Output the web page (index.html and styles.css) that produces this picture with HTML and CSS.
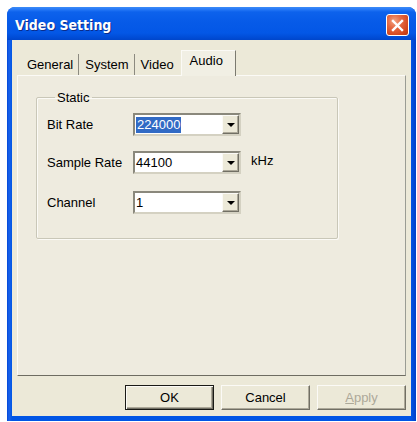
FILE: index.html
```html
<!DOCTYPE html>
<html>
<head>
<meta charset="utf-8">
<title>Video Setting</title>
<link rel="stylesheet" href="styles.css">
</head>
<body>
<div class="window">
  <div class="titlebar">
    <span class="title">Video Setting</span>
    <span class="close">
      <svg width="13" height="13" viewBox="0 0 13 13"><path d="M2 2 L11 11 M11 2 L2 11" stroke="#fff" stroke-width="2.4" stroke-linecap="square"/></svg>
    </span>
  </div>
  <div class="client">
    <div class="tabs">
      <div class="tab tab-first">General</div>
      <div class="tab">System</div>
      <div class="tab tab-last">Video</div>
      <div class="tab tab-active">Audio</div>
    </div>
    <div class="panel">
      <fieldset class="group">
        <legend class="legend">Static</legend>
        <div class="row">
          <span class="label">Bit Rate</span>
          <span class="combo"><span class="value"><span class="sel">224000</span></span><span class="drop"><span class="arrow"></span></span></span>
        </div>
        <div class="row row-2">
          <span class="label">Sample Rate</span>
          <span class="combo"><span class="value">44100</span><span class="drop"><span class="arrow"></span></span></span>
          <span class="unit">kHz</span>
        </div>
        <div class="row row-3">
          <span class="label">Channel</span>
          <span class="combo"><span class="value">1</span><span class="drop"><span class="arrow"></span></span></span>
        </div>
      </fieldset>
    </div>
    <div class="buttons">
      <div class="btn btn-default">OK</div>
      <div class="btn">Cancel</div>
      <div class="btn btn-disabled"><u>A</u>pply</div>
    </div>
  </div>
</div>
</body>
</html>
```

FILE: styles.css
```css
html, body {
  margin: 0;
  padding: 0;
  background: #ffffff;
}
body {
  font-family: "Liberation Sans", Arial, sans-serif;
  font-size: 13px;
  color: #000;
}
.window {
  margin: 7px 0 0 7px;
  width: 409px;
  height: 414px;
  background: linear-gradient(to right, #0046d8 0, #1a62ea 2px, #0055e5 5px, #0055e5 404px, #0040c8 409px);
  border-radius: 8px 8px 0 0;
  display: flex;
  flex-direction: column;
  overflow: hidden;
}
.titlebar {
  height: 33px;
  flex: none;
  display: flex;
  align-items: center;
  justify-content: space-between;
  background: linear-gradient(to bottom, #3d8cf5 0, #2a7cf8 2px, #0d62ec 5px, #075be8 14px, #0357e6 26px, #004bd4 31px, #0046ca 33px);
}
.title {
  color: #fff;
  font-family: "DejaVu Sans Condensed", "DejaVu Sans", "Liberation Sans", sans-serif;
  font-stretch: condensed;
  font-weight: bold;
  font-size: 14px;
  padding: 2px 0 0 8px;
  text-shadow: 1px 1px 0 #0a2c8a;
}
.close {
  width: 21px;
  height: 20px;
  margin-right: 7px;
  margin-top: 3px;
  border: 1px solid #fff;
  border-radius: 3px;
  background: radial-gradient(circle at 35% 30%, #f3a482 0, #e66a43 35%, #d2461d 75%, #b9360f 100%);
  display: flex;
  align-items: center;
  justify-content: center;
}
.client {
  flex: none;
  height: 376px;
  margin: 0 5px;
  background: #ece9d8;
  display: flex;
  flex-direction: column;
  padding: 0 5px;
}
.tabs {
  height: 35px;
  flex: none;
  display: flex;
  align-items: flex-end;
  padding-left: 3px;
  position: relative;
  z-index: 1;
}
.tab {
  height: 21px;
  line-height: 21px;
  padding: 0 5px 0 6px;
  border-right: 1px solid #8c8a80;
  box-sizing: border-box;
  margin-bottom: 0;
  background: #ece9d8;
}
.tab-first {
  padding-left: 7px;
}
.tab-last {
  border-right: none;
  padding-right: 5px;
}
.tab-active {
  height: 26px;
  line-height: 19px;
  margin-bottom: -1px;
  padding: 0 12px 0 8px;
  border-left: 1px solid #fbfaf6;
  border-top: 1px solid #fbfaf6;
  border-right: 1px solid #7b7a70;
  background: #f1efe4;
  margin-left: 2px;
}
.panel {
  flex: none;
  height: 301px;
  box-sizing: border-box;
  border: 1px solid #9a9c94;
  border-bottom: 1px solid #6e6c62;
  border-top-color: #fbfaf6;
  border-left-color: #fbfaf6;
  background: #eeebdf;
  padding: 14px 0 0 18px;
}
.group {
  margin: 0;
  width: 302px;
  box-sizing: border-box;
  border: 1px solid #c9c7b8;
  box-shadow: 1px 1px 0 #fbfaf6, inset 1px 1px 0 #fbfaf6;
  border-radius: 2px;
  padding: 8px 0 24px 10px;
}
.legend {
  padding: 0 2px;
  margin-left: 8px;
  line-height: 15px;
}
.row {
  display: flex;
  align-items: center;
  height: 23px;
}
.row-2 {
  margin-top: 15px;
}
.row-3 {
  margin-top: 17px;
}
.label {
  width: 86px;
  flex: none;
}
.combo {
  width: 108px;
  height: 23px;
  box-sizing: border-box;
  border: 2px solid;
  border-color: #8a887c #d4d1c2 #d4d1c2 #8a887c;
  background: #fff;
  display: flex;
  align-items: stretch;
  flex: none;
}
.value {
  flex: 1;
  display: flex;
  align-items: center;
  padding-left: 1px;
}
.sel {
  background: #316ac5;
  color: #fff;
  line-height: 16px;
  padding: 0 1px;
}
.drop {
  width: 17px;
  flex: none;
  box-sizing: border-box;
  background: #ece9d8;
  border: 1px solid;
  border-color: #fbfaf6 #716f64 #716f64 #fbfaf6;
  box-shadow: inset -1px -1px 0 #aca899;
  display: flex;
  align-items: center;
  justify-content: center;
}
.arrow {
  width: 0;
  height: 0;
  border-left: 4px solid transparent;
  border-right: 4px solid transparent;
  border-top: 4px solid #000;
  margin-top: 1px;
}
.unit {
  margin-left: 10px;
  margin-top: -5px;
}
.buttons {
  flex: none;
  margin-top: 9px;
  display: flex;
  justify-content: flex-end;
  gap: 7px;
}
.btn {
  width: 89px;
  height: 25px;
  box-sizing: border-box;
  border: 1px solid;
  border-color: #fbfaf6 #716f64 #716f64 #fbfaf6;
  box-shadow: inset -1px -1px 0 #aca899;
  background: #ece9d8;
  display: flex;
  align-items: center;
  justify-content: center;
}
.btn-default {
  border: 1px solid #1a1a16;
  box-shadow: inset 1px 1px 0 #fbfaf6, inset -1px -1px 0 #716f64, inset -2px -2px 0 #aca899;
}
.btn-disabled {
  color: #aca899;
}
.btn-disabled u {
  text-decoration: underline;
}
```
